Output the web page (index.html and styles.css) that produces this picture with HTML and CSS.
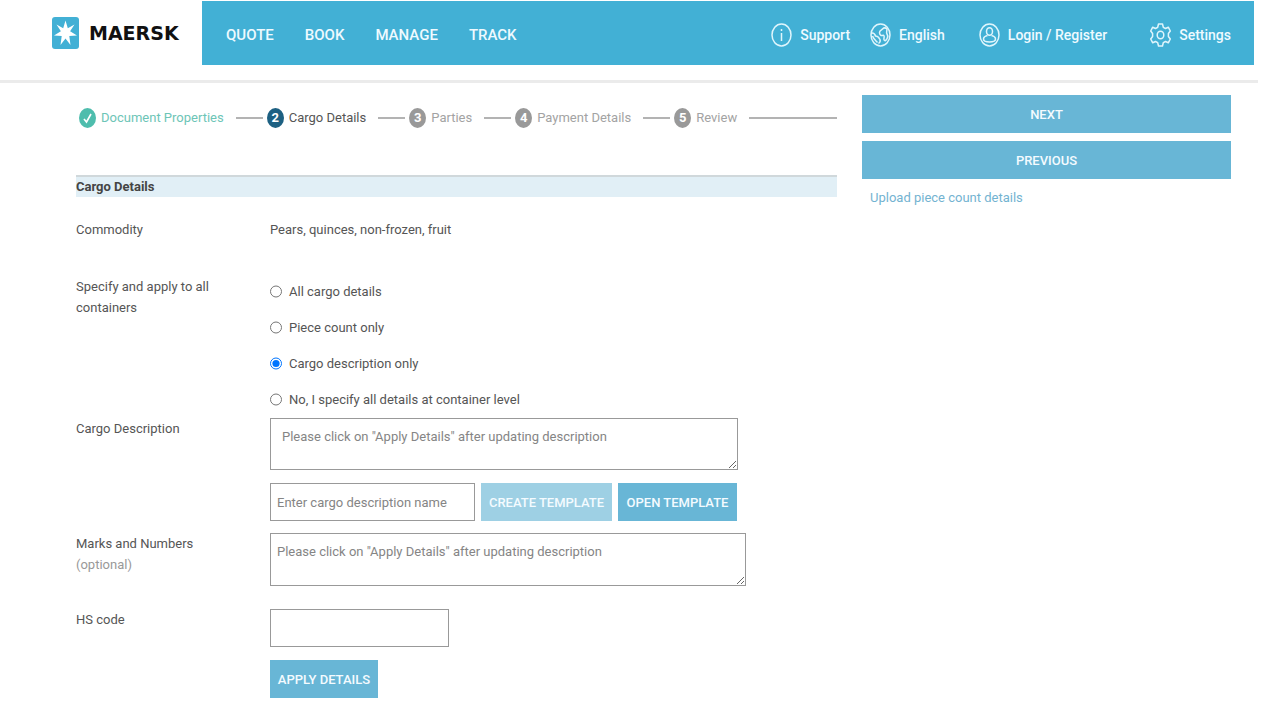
FILE: index.html
```html
<!DOCTYPE html>
<html lang="en">
<head>
  <meta charset="UTF-8">
  <title>Maersk - Cargo Details</title>
  <link rel="stylesheet" href="styles.css">
</head>
<body>
  <header class="header">
    <a class="logo" href="#">
      <svg width="27" height="32" viewBox="0 0 27 32">
        <rect width="27" height="32" rx="3" fill="#42b0d5"/>
        <polygon fill="#fff" points="13.5,3.5 15.8,11.200 22.500,7.500 18.100,14.200 25,18.500 17.300,19 18.500,28 13.5,21.500 8.500,28 9.700,19 2,18.500 8.900,14.200 4.500,7.500 11.200,11.200"/>
      </svg>
      <span>MAERSK</span>
    </a>
    <nav class="nav">
      <div class="menu">
        <a href="#">QUOTE</a>
        <a href="#">BOOK</a>
        <a href="#">MANAGE</a>
        <a href="#">TRACK</a>
      </div>
      <div class="tools">
        <a class="support" href="#">
          <svg width="21" height="24" viewBox="0 0 21 24">
            <ellipse cx="10.5" cy="12" rx="9.5" ry="11"/>
            <path d="M10.5 10v8M10.5 6v2"/>
          </svg>
          Support
        </a>
        <a class="language" href="#">
          <svg width="21" height="24" viewBox="0 0 21 24">
            <ellipse cx="10.5" cy="12" rx="9.5" ry="11"/>
            <path d="M2 10c2 0 3 1 3.500 3 2 0 3.500 1.500 4.500 3.500.5 1.500 0 3-1.500 4M2.500 13c1 3 3 4.500 5 6.500M17 6c-2-2-3.500-1-4.500 0s-3 1.500-3 3.500 1.500 3.500 3 3 2 .5 1.500 2.500.5 3 1.500 2.500 1.500-1.500 2-3 .5-2-.5-3.500 0-3.500 0-5"/>
          </svg>
          English
        </a>
        <a class="login" href="#">
          <svg width="21" height="24" viewBox="0 0 21 24">
            <ellipse cx="10.5" cy="12" rx="9.5" ry="11"/>
            <ellipse cx="10.5" cy="8.5" rx="3" ry="3.8"/>
            <path d="M8.5 12.500c-2 .5-4 1.500-4 3.500s3 3 6 3 6-1 6-3-2-3-4-3.500"/>
          </svg>
          Login / Register
        </a>
        <a class="settings" href="#">
          <svg width="21" height="24" viewBox="0 0 21 24">
            <path stroke-linejoin="round" d="M8.500 1h4l.8 3.300 2.200 1.200 2.800-1.300 2 3.800-1.900 2.500v3l1.900 2.500-2 3.800-2.800-1.300-2.200 1.200-.8 3.300h-4l-.8-3.300-2.200-1.200-2.800 1.300-2-3.800 1.900-2.500v-3l-1.900-2.500 2-3.800 2.800 1.300 2.200-1.200z"/>
            <ellipse cx="10.5" cy="12" rx="3.300" ry="3.800"/>
          </svg>
          Settings
        </a>
      </div>
    </nav>
  </header>

  <main class="page">
    <div class="content">
      <ol class="steps">
        <li class="done">
          <svg width="17" height="20" viewBox="0 0 17 20">
            <ellipse cx="8.5" cy="10" rx="8.5" ry="10" fill="#4ebdad"/>
            <path d="M5 11l2.500 3L12 6" fill="none" stroke="#fff" stroke-width="1.600"/>
          </svg>
          Document Properties
        </li>
        <li class="active"><span class="num">2</span>Cargo Details</li>
        <li><span class="num">3</span>Parties</li>
        <li><span class="num">4</span>Payment Details</li>
        <li><span class="num">5</span>Review</li>
      </ol>

      <h2>Cargo Details</h2>

      <form class="form">
        <div class="row commodity">
          <span>Commodity</span>
          <span>Pears, quinces, non-frozen, fruit</span>
        </div>

        <div class="row specify" role="radiogroup" aria-labelledby="specifyLabel">
          <span class="label" id="specifyLabel">Specify and apply to all containers</span>
          <div class="options">
            <label><input type="radio" name="apply">All cargo details</label>
            <label><input type="radio" name="apply">Piece count only</label>
            <label><input type="radio" name="apply" checked>Cargo description only</label>
            <label><input type="radio" name="apply">No, I specify all details at container level</label>
          </div>
        </div>

        <div class="row description">
          <label for="description">Cargo Description</label>
          <div>
            <textarea id="description" placeholder='Please click on "Apply Details" after updating description'></textarea>
            <div class="template">
              <input type="text" aria-label="Cargo description name" placeholder="Enter cargo description name">
              <button type="button" disabled>CREATE TEMPLATE</button>
              <button type="button">OPEN TEMPLATE</button>
            </div>
          </div>
        </div>

        <div class="row marks">
          <label for="marks">Marks and Numbers<br><span class="optional">(optional)</span></label>
          <textarea id="marks" placeholder='Please click on "Apply Details" after updating description'></textarea>
        </div>

        <div class="row hs">
          <label for="hs">HS code</label>
          <div>
            <input type="text" id="hs">
            <button type="button" class="apply">APPLY DETAILS</button>
          </div>
        </div>
      </form>
    </div>

    <aside class="side">
      <button type="button">NEXT</button>
      <button type="button">PREVIOUS</button>
      <a href="#">Upload piece count details</a>
    </aside>
  </main>
</body>
</html>
```
FILE: styles.css
```css
* {
  box-sizing: border-box;
}
body {
  margin: 0;
  background-color: #fff;
  font-family: "Roboto", sans-serif;
  font-size: 13px;
  line-height: 21px;
  color: #555;
}
a {
  text-decoration: none;
}
.header {
  display: flex;
  margin-right: 22px;
  padding: 1px 4px 15px 0;
  border-bottom: 3px solid #ebebeb;
}
.logo {
  width: 202px;
  padding-left: 52px;
  display: flex;
  align-items: center;
  gap: 10px;
  font-family: "DejaVu Sans", sans-serif;
  font-size: 19px;
  font-weight: 700;
  color: #111;
}
.nav {
  flex: 1;
  height: 64px;
  padding: 4px 23px 0 24px;
  display: flex;
  align-items: center;
  justify-content: space-between;
  background-color: #42b0d5;
  font-size: 15px;
  font-weight: 500;
}
.nav a {
  color: #eefaff;
}
.menu {
  display: flex;
  gap: 31px;
}
.tools {
  display: flex;
  font-size: 14px;
}
.tools a {
  display: flex;
  align-items: center;
  gap: 8px;
}
.tools svg {
  fill: none;
  stroke: #dff5fc;
  stroke-width: 1.5;
}
.language {
  margin-left: 20px;
}
.login {
  margin-left: 34px;
}
.settings {
  margin-left: 43px;
}
.page {
  display: flex;
  align-items: flex-start;
  gap: 25px;
  padding: 12px 49px 20px 76px;
}
.content {
  flex: 1;
}
.steps {
  display: flex;
  margin: 0 0 35px;
  padding: 0 0 0 3px;
  list-style: none;
  color: #a3a3a3;
}
.steps li {
  display: flex;
  align-items: center;
  gap: 5px;
  height: 45px;
  white-space: nowrap;
}
.steps li::after {
  content: "";
  width: 27px;
  height: 2px;
  margin: 0 4px 0 7px;
  background-color: #b3b3b3;
}
.steps li:last-child {
  flex: 1;
}
.steps li:last-child::after {
  flex: 1;
  margin-right: 0;
}
.steps .done {
  color: #6dc5b7;
}
.steps .active {
  color: #555;
}
.num {
  width: 17px;
  height: 20px;
  border-radius: 50%;
  background-color: #999;
  color: #fff;
  font-weight: 700;
  line-height: 20px;
  text-align: center;
}
.active .num {
  background-color: #1d6082;
}
h2 {
  margin: 0;
  border-top: 2px solid #d0d8db;
  background-color: #e1eff6;
  font-size: 13px;
  line-height: 20px;
  color: #444;
}
.row {
  display: grid;
  grid-template-columns: 194px 1fr;
}
.commodity {
  margin-top: 22px;
}
.specify {
  margin-top: 36px;
}
.label {
  max-width: 160px;
}
.options {
  margin: -3px 0 1px;
}
.options label {
  display: flex;
  align-items: center;
  height: 36px;
}
.options input {
  width: 12px;
  height: 13px;
  margin: 0 7px 0 0;
}
textarea,
input[type="text"] {
  display: block;
  border: 1px solid #999;
  background-color: #fff;
  font: inherit;
  color: #555;
}
::placeholder {
  color: #858585;
}
textarea {
  width: 468px;
  height: 52px;
  padding: 7px 11px;
}
.template {
  display: flex;
  gap: 6px;
  margin: 13px 0 12px;
}
input[type="text"] {
  height: 38px;
  padding: 0 6px;
}
.template input {
  width: 205px;
}
button {
  height: 38px;
  padding: 0;
  border: none;
  background-color: #68b6d6;
  color: #f4fbff;
  font: inherit;
  font-weight: 500;
}
button:disabled {
  background-color: #9ed0e4;
}
.template button {
  width: 119px;
}
.template button:disabled {
  width: 131px;
}
.marks textarea {
  width: 476px;
  height: 53px;
  padding: 7px 6px;
}
.optional {
  color: #999;
}
.hs {
  margin-top: 23px;
}
.hs input {
  width: 179px;
  margin-bottom: 13px;
}
.apply {
  width: 108px;
}
.side {
  width: 369px;
  display: flex;
  flex-direction: column;
  gap: 8px;
}
.side a {
  padding-left: 8px;
  color: #73b3d1;
}
```
